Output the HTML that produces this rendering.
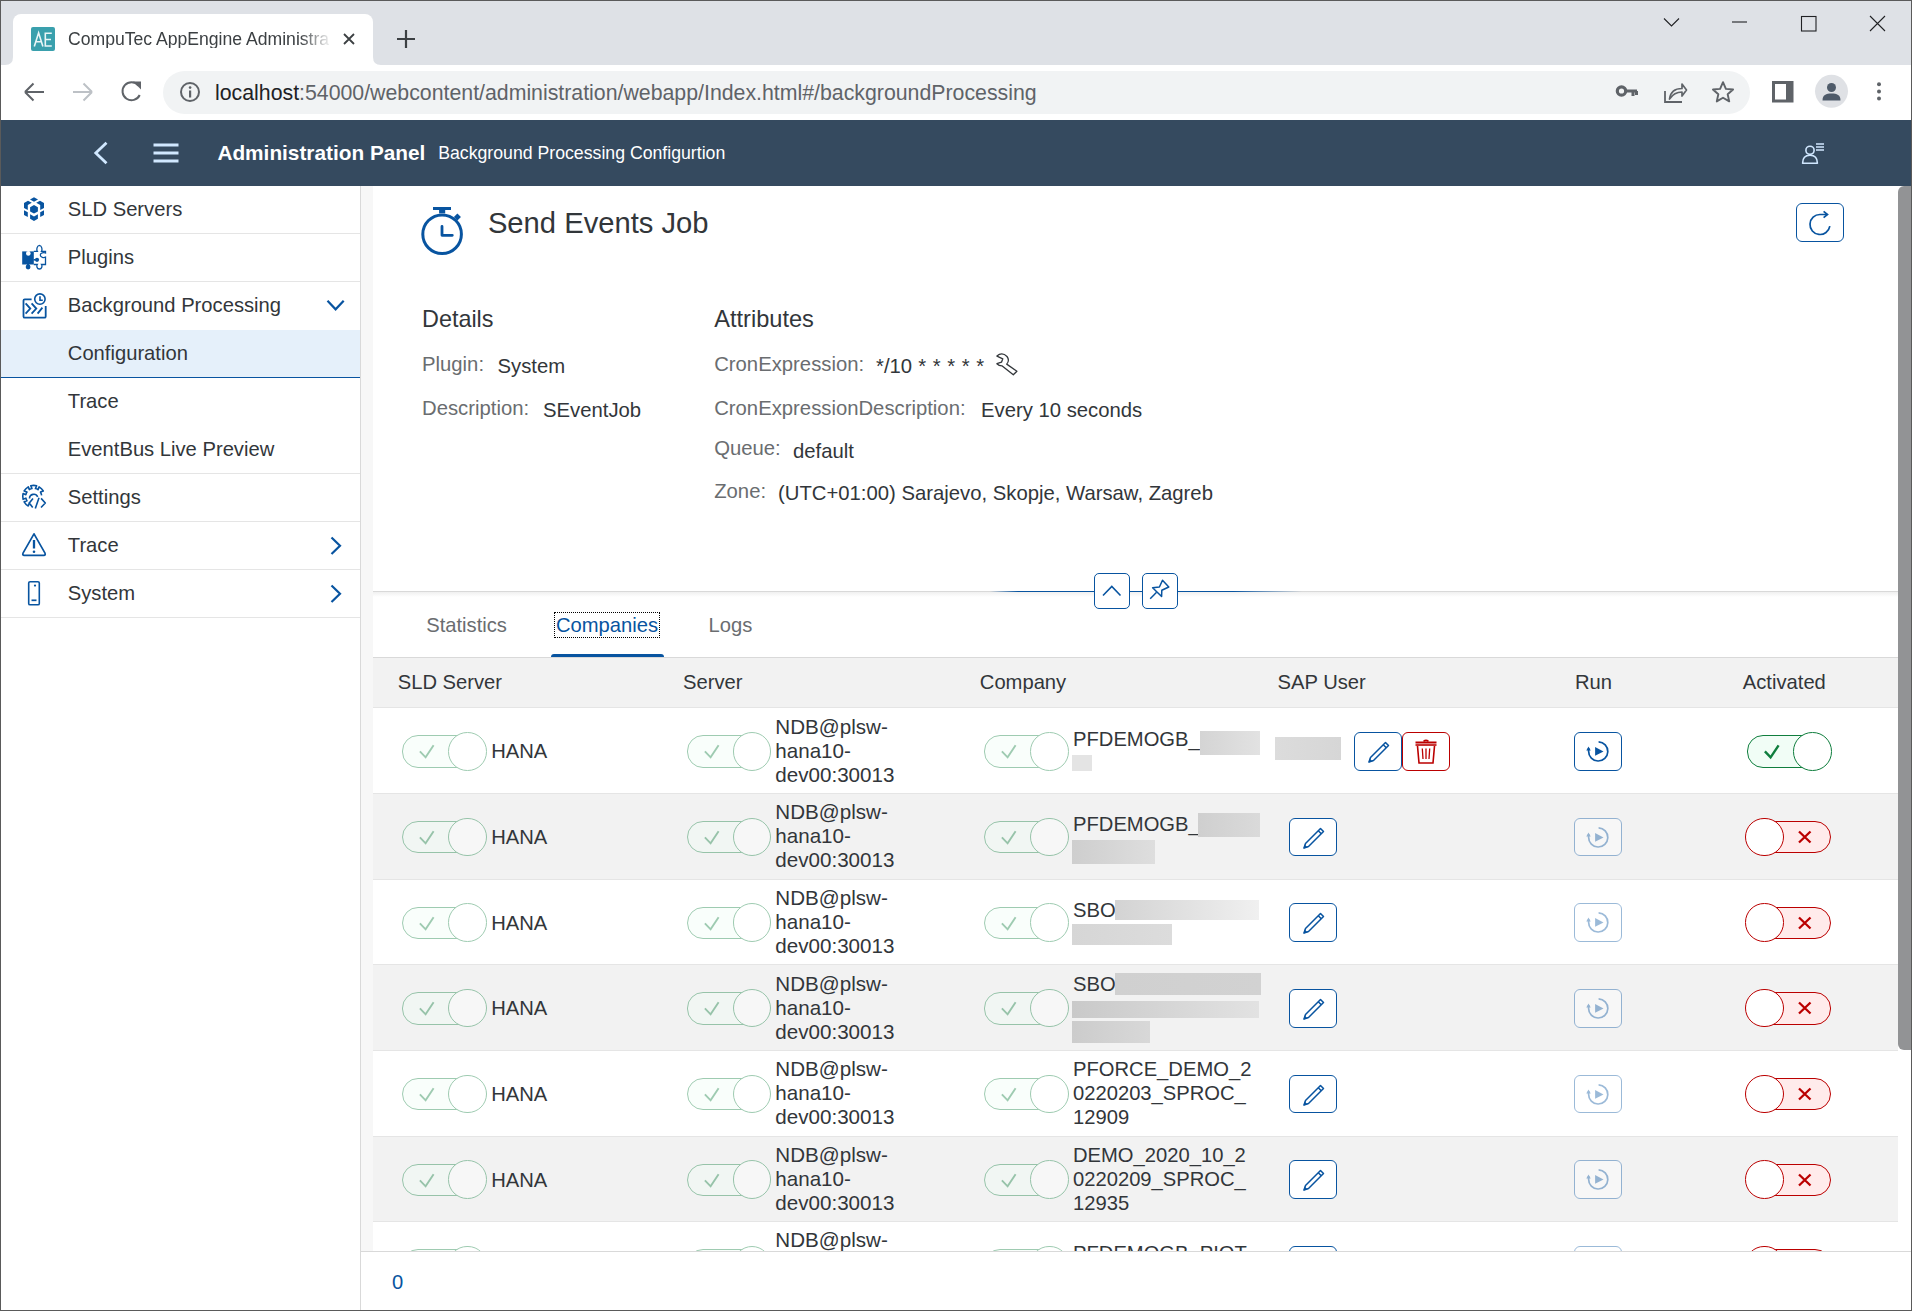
<!DOCTYPE html>
<html><head><meta charset="utf-8"><title>CompuTec AppEngine Administration</title>
<style>
html,body{margin:0;padding:0;width:1912px;height:1311px;overflow:hidden;background:#fff;font-family:"Liberation Sans", sans-serif;}
.t{position:absolute;white-space:nowrap;}
svg{position:absolute;overflow:visible;}
</style></head><body>
<div style="position:absolute;left:0px;top:0px;width:1912px;height:65px;background:#dee1e6;"></div>
<div style="position:absolute;left:13px;top:14px;width:360px;height:51px;background:#fff;border-radius:8px 8px 0 0;"></div>
<svg style="left:0;top:0" width="400" height="66"><path d="M5 65 Q13 65 13 57 L13 65 Z" fill="#fff"/><path d="M381 65 Q373 65 373 57 L373 65 Z" fill="#fff"/></svg>
<div style="position:absolute;left:31px;top:27px;width:24px;height:24px;background:#3aa0ad;border-radius:2px;"></div>
<svg style="left:0;top:0" width="60" height="60"><path d="M34.3 46.5L38.6 32.8L42.9 46.5M35.8 41.8H41.4M51.8 33.3H45.3V46H51.8M45.3 39.5H51" fill="none" stroke="#eaf6f7" stroke-width="1.6"/></svg>
<div class="t" style="left:68px;top:30.90px;font-size:17.6px;line-height:17.6px;color:#3c4043;font-weight:400;width:264px;overflow:hidden;-webkit-mask-image:linear-gradient(90deg,#000 232px,transparent 264px);">CompuTec AppEngine Administra</div>
<svg style="left:343px;top:33px" width="12" height="12"><path d="M1 1L11 11M11 1L1 11" stroke="#3c4043" stroke-width="1.8"/></svg>
<svg style="left:397px;top:30px" width="18" height="18"><path d="M9 0V18M0 9H18" stroke="#3c4043" stroke-width="2.2"/></svg>
<svg style="left:1660px;top:12px" width="240" height="24"><path d="M4 6.5L11.5 14L19 6.5" fill="none" stroke="#202124" stroke-width="1.1"/><path d="M72 10H87" stroke="#202124" stroke-width="1.1"/><rect x="141.5" y="4.5" width="14.5" height="14.5" fill="none" stroke="#202124" stroke-width="1.1"/><path d="M210 4L225 19M225 4L210 19" stroke="#202124" stroke-width="1.1"/></svg>
<div style="position:absolute;left:0px;top:65px;width:1912px;height:55px;background:#fff;"></div>
<svg style="left:0;top:65px" width="160" height="55"><path d="M25 27H44M25 27L33.5 18.5M25 27L33.5 35.5" fill="none" stroke="#5f6368" stroke-width="2"/><path d="M73 27H92M92 27L83.5 18.5M92 27L83.5 35.5" fill="none" stroke="#bdc1c6" stroke-width="2"/><path d="M138.5 20.5 A9 9 0 1 0 139.7 30" fill="none" stroke="#5f6368" stroke-width="2"/><path d="M133 16.5H141V24.5Z" fill="#5f6368" transform="rotate(0)"/></svg>
<div style="position:absolute;left:163px;top:71px;width:1587px;height:43px;background:#f1f3f4;border-radius:22px;"></div>
<svg style="left:179px;top:81px" width="22" height="22"><circle cx="11" cy="11" r="9" fill="none" stroke="#5f6368" stroke-width="2"/><rect x="10" y="9.5" width="2.2" height="7" fill="#5f6368"/><circle cx="11.1" cy="6.6" r="1.3" fill="#5f6368"/></svg>
<div class="t" style="left:215px;top:83.17px;font-size:21.3px;line-height:21.3px;color:#202124;font-weight:400;">localhost<span style="color:#5f6368">:54000/webcontent/administration/webapp/Index.html#/backgroundProcessing</span></div>
<svg style="left:1600px;top:65px" width="312" height="55"><circle cx="21.5" cy="26" r="4.2" fill="none" stroke="#5f6368" stroke-width="3.2"/><path d="M25 26H37M33 26V31M36.5 26V30" stroke="#5f6368" stroke-width="3"/><path d="M65 26V37H82" fill="none" stroke="#5f6368" stroke-width="1.8"/><path d="M69.5 34C70.5 26.5 75 23.5 82 23.5V19L86.5 25L82 31V27C76.5 27 72.5 29.5 69.5 34Z" fill="none" stroke="#5f6368" stroke-width="1.7" stroke-linejoin="round"/><path d="M123.00 17.20L125.88 23.84L133.08 24.52L127.66 29.31L129.23 36.38L123.00 32.70L116.77 36.38L118.34 29.31L112.92 24.52L120.12 23.84Z" fill="none" stroke="#5f6368" stroke-width="1.9" stroke-linejoin="round"/><rect x="173.5" y="17.5" width="18.5" height="18.5" fill="none" stroke="#5f6368" stroke-width="3"/><rect x="186" y="17" width="7" height="20" fill="#5f6368"/><circle cx="231.5" cy="26.3" r="16.5" fill="#dfe1e5"/><circle cx="231.5" cy="22.5" r="4.5" fill="#4f5b6a"/><path d="M222.5 35.5C222.5 30 226 28.5 231.5 28.5C237 28.5 240.5 30 240.5 35.5Z" fill="#4f5b6a"/><circle cx="279" cy="19.3" r="2" fill="#5f6368"/><circle cx="279" cy="26.4" r="2" fill="#5f6368"/><circle cx="279" cy="33.6" r="2" fill="#5f6368"/></svg>
<div style="position:absolute;left:0px;top:120px;width:1912px;height:66px;background:#354a5f;"></div>
<svg style="left:0;top:120px" width="200" height="66"><path d="M106.5 22.8L95.8 33L106.5 43.2" fill="none" stroke="#d1e8ff" stroke-width="2.8"/><path d="M153.5 25H178.5M153.5 33H178.5M153.5 41H178.5" stroke="#d1e8ff" stroke-width="3"/></svg>
<div class="t" style="left:217.4px;top:142.89px;font-size:20.8px;line-height:20.8px;color:#fff;font-weight:700;">Administration Panel</div>
<div class="t" style="left:438.2px;top:144.62px;font-size:17.7px;line-height:17.7px;color:#fff;font-weight:400;">Background Processing Configurtion</div>
<svg style="left:1795px;top:135px" width="40" height="40"><circle cx="15" cy="15.3" r="4.1" fill="none" stroke="#d1e8ff" stroke-width="1.6"/><path d="M7.6 28.3C7.6 22.5 10.5 20.3 15 20.3C19.5 20.3 22.4 22.5 22.4 28.3Z" fill="none" stroke="#d1e8ff" stroke-width="1.6" stroke-linejoin="round"/><path d="M21 9H29M21 12H29M21 15H29" stroke="#d1e8ff" stroke-width="1.3"/></svg>
<div style="position:absolute;left:0px;top:186px;width:360px;height:1125px;background:#fff;"></div>
<div style="position:absolute;left:360px;top:186px;width:1px;height:1125px;background:#d9d9d9;"></div>
<div style="position:absolute;left:361px;top:186px;width:12px;height:1065px;background:#f7f7f7;"></div>
<div style="position:absolute;left:1px;top:330px;width:359px;height:47px;background:#e5f0fa;"></div>
<div style="position:absolute;left:1px;top:377px;width:359px;height:1px;background:#0854a0;"></div>
<div style="position:absolute;left:1px;top:233px;width:359px;height:1px;background:#e5e5e5;"></div>
<div style="position:absolute;left:1px;top:281px;width:359px;height:1px;background:#e5e5e5;"></div>
<div style="position:absolute;left:1px;top:473px;width:359px;height:1px;background:#e5e5e5;"></div>
<div style="position:absolute;left:1px;top:521px;width:359px;height:1px;background:#e5e5e5;"></div>
<div style="position:absolute;left:1px;top:569px;width:359px;height:1px;background:#e5e5e5;"></div>
<div style="position:absolute;left:1px;top:617px;width:359px;height:1px;background:#e5e5e5;"></div>
<div class="t" style="left:67.8px;top:198.70px;font-size:20.2px;line-height:20.2px;color:#32363a;font-weight:400;">SLD Servers</div>
<div class="t" style="left:67.8px;top:246.70px;font-size:20.2px;line-height:20.2px;color:#32363a;font-weight:400;">Plugins</div>
<div class="t" style="left:67.8px;top:294.70px;font-size:20.2px;line-height:20.2px;color:#32363a;font-weight:400;">Background Processing</div>
<div class="t" style="left:67.8px;top:342.60px;font-size:20.2px;line-height:20.2px;color:#32363a;font-weight:400;">Configuration</div>
<div class="t" style="left:67.8px;top:390.70px;font-size:20.2px;line-height:20.2px;color:#32363a;font-weight:400;">Trace</div>
<div class="t" style="left:67.8px;top:438.60px;font-size:20.2px;line-height:20.2px;color:#32363a;font-weight:400;">EventBus Live Preview</div>
<div class="t" style="left:67.8px;top:486.80px;font-size:20.2px;line-height:20.2px;color:#32363a;font-weight:400;">Settings</div>
<div class="t" style="left:67.8px;top:534.80px;font-size:20.2px;line-height:20.2px;color:#32363a;font-weight:400;">Trace</div>
<div class="t" style="left:67.8px;top:582.80px;font-size:20.2px;line-height:20.2px;color:#32363a;font-weight:400;">System</div>
<svg style="left:0;top:0" width="360" height="640"><g fill="#0854a0"><path d="M34 197.2L38 199.4L34 201.7L30 199.4Z"/><path d="M24 203L28 200.8L31.8 202.8L27.8 205V210L24 208Z"/><path d="M44 203L40 200.8L36.2 202.8L40.2 205V210L44 208Z"/><path d="M34 205L37.9 207.2V211.5L34 213.6L30.1 211.5V207.2Z"/><path d="M24 210.3L27.8 212.3V217L24 215Z"/><path d="M44 210.3L40.2 212.3V217L44 215Z"/><path d="M30.1 214.3L34 216.5L37.9 214.3V218.8L34 221L30.1 218.8Z"/></g><rect x="22.2" y="251.4" width="11.6" height="13.1" fill="#0854a0"/><circle cx="28.3" cy="253.4" r="2.3" fill="#fff"/><circle cx="28.1" cy="267" r="2.4" fill="#0854a0"/><rect x="27" y="264" width="2.2" height="2" fill="#0854a0"/><circle cx="37" cy="259.8" r="2.1" fill="#0854a0"/><rect x="33.5" y="259" width="2" height="1.6" fill="#0854a0"/><path d="M33.8 251.4H37.3C36.5 250.2 36.7 245.5 39.4 245.3C42.1 245.5 42.3 250.2 41.5 251.4H45.5V253C44 252.3 40.3 252.5 40.3 255.1C40.3 257.7 44 257.9 45.5 257.2V264.5H41.5C42.3 265.7 42.1 269 39.4 269C36.7 269 36.5 265.7 37.3 264.5H33.8" fill="none" stroke="#0854a0" stroke-width="1.3"/><g fill="none" stroke="#0854a0" stroke-width="1.8"><path d="M31.6 299.3H24.8Q23.5 299.3 23.5 300.6V316.4Q23.5 317.7 24.8 317.7H44.4Q45.7 317.7 45.7 316.4V306"/><circle cx="39.9" cy="299.1" r="5.2" stroke-width="1.6"/><path d="M40 296.2V300.2H42.8" stroke-width="1.6"/><path d="M25.6 303.3L30.3 308.6L25.6 313.6M31.6 303.3L36.3 308.6L31.6 313.6M42.4 307.6L37.6 313.6"/></g><g fill="none" stroke="#0854a0" stroke-width="1.6" stroke-linejoin="round"><path d="M41.62 495.29A8.0 8.0 0 0 0 40.45 492.10L43.27 490.98A11.0 11.0 0 0 0 39.12 486.83L38.00 489.65A8.0 8.0 0 0 0 35.43 488.59L36.64 485.80A11.0 11.0 0 0 0 30.76 485.80L31.97 488.59A8.0 8.0 0 0 0 29.40 489.65L28.28 486.83A11.0 11.0 0 0 0 24.13 490.98L26.95 492.10A8.0 8.0 0 0 0 25.89 494.67L23.10 493.46A11.0 11.0 0 0 0 23.10 499.34L25.89 498.13A8.0 8.0 0 0 0 26.95 500.70L24.13 501.82A11.0 11.0 0 0 0 28.28 505.97L29.40 503.15A8.0 8.0 0 0 0 28.77 502.70"/><path d="M29.5 498.5A4.3 4.3 0 0 1 37.7 496.8"/><path d="M33 498.4L29.3 503L32.7 507.5M41.1 498.4L45.3 503L41 507.5M39 497.7L35.3 508.4"/></g><path d="M34 533.8L45 553.2Q45.8 555.3 43.8 555.3H24.2Q22.2 555.3 23 553.2Z" fill="none" stroke="#0854a0" stroke-width="1.7" stroke-linejoin="round"/><path d="M34 540V548.5" stroke="#0854a0" stroke-width="2.3"/><circle cx="34" cy="551.8" r="1.3" fill="#0854a0"/><rect x="28.7" y="581.7" width="10.6" height="23.1" rx="1.4" fill="none" stroke="#0854a0" stroke-width="1.6"/><circle cx="35" cy="585.6" r="1.1" fill="#0854a0"/><path d="M31.5 600.3H36.5" stroke="#0854a0" stroke-width="1.7"/><path d="M327.5 300.8L335.6 309.3L343.7 300.8" fill="none" stroke="#0854a0" stroke-width="2.2"/><path d="M331.5 537.5L340 545.8L331.5 554" fill="none" stroke="#0854a0" stroke-width="2.2"/><path d="M331.5 585.5L340 593.8L331.5 602" fill="none" stroke="#0854a0" stroke-width="2.2"/></svg>
<div class="t" style="left:487.9px;top:208.98px;font-size:29.2px;line-height:29.2px;color:#32363a;font-weight:400;">Send Events Job</div>
<svg style="left:0;top:0" width="480" height="270"><circle cx="442.1" cy="234.2" r="19.3" fill="none" stroke="#0854a0" stroke-width="3"/><path d="M433 208.5H451" stroke="#0854a0" stroke-width="3"/><path d="M439.1 210V213.5Q442.1 212.8 445.2 213.5V210Z" fill="#0854a0"/><rect x="454.9" y="214.5" width="5" height="5" transform="rotate(45 457.4 217)" fill="#0854a0"/><path d="M442 226.5V235.3H452.3" fill="none" stroke="#0854a0" stroke-width="2.8" stroke-linecap="round" stroke-linejoin="round"/></svg>
<div style="position:absolute;left:1796px;top:203px;width:46px;height:37px;border:1px solid #0854a0;border-radius:6px;background:#fff;"></div>
<svg style="left:1796px;top:203px" width="48" height="39"><path d="M33.85 23.2A10 10 0 1 1 24 11.5H31.3" fill="none" stroke="#0854a0" stroke-width="1.7"/><path d="M27.6 8.3L31.5 11.5L27.6 14.6" fill="none" stroke="#0854a0" stroke-width="1.7"/></svg>
<div class="t" style="left:422px;top:308.29px;font-size:23.4px;line-height:23.4px;color:#32363a;font-weight:400;">Details</div>
<div class="t" style="left:714.2px;top:308.12px;font-size:23.6px;line-height:23.6px;color:#32363a;font-weight:400;">Attributes</div>
<div class="t" style="left:422px;top:353.52px;font-size:20.3px;line-height:20.3px;color:#6a6d70;font-weight:400;">Plugin:</div>
<div class="t" style="left:497.5px;top:355.82px;font-size:20.3px;line-height:20.3px;color:#32363a;font-weight:400;">System</div>
<div class="t" style="left:422px;top:397.52px;font-size:20.3px;line-height:20.3px;color:#6a6d70;font-weight:400;">Description:</div>
<div class="t" style="left:543px;top:399.82px;font-size:20.3px;line-height:20.3px;color:#32363a;font-weight:400;">SEventJob</div>
<div class="t" style="left:714.2px;top:353.52px;font-size:20.3px;line-height:20.3px;color:#6a6d70;font-weight:400;">CronExpression:</div>
<div class="t" style="left:876px;top:356.42px;font-size:20.3px;line-height:20.3px;color:#32363a;font-weight:400;">*/10<span style="letter-spacing:0.5px"> * * * * *</span></div>
<svg style="left:0;top:0" width="1100" height="400"><path d="M996.9 356.1Q1002 351.5 1007 356.5Q1010 360.5 1006.7 364.1L1016.9 371.2L1013.3 374.8L1002.2 365.9Q999 366 996.9 363.7L1001.5 362.2L1002.8 358.8Z" fill="none" stroke="#32363a" stroke-width="1.3" stroke-linejoin="round"/></svg>
<div class="t" style="left:714.2px;top:397.52px;font-size:20.3px;line-height:20.3px;color:#6a6d70;font-weight:400;">CronExpressionDescription:</div>
<div class="t" style="left:981px;top:399.82px;font-size:20.3px;line-height:20.3px;color:#32363a;font-weight:400;">Every 10 seconds</div>
<div class="t" style="left:714.2px;top:437.82px;font-size:20.3px;line-height:20.3px;color:#6a6d70;font-weight:400;">Queue:</div>
<div class="t" style="left:793px;top:441.42px;font-size:20.3px;line-height:20.3px;color:#32363a;font-weight:400;">default</div>
<div class="t" style="left:714.2px;top:480.82px;font-size:20.3px;line-height:20.3px;color:#6a6d70;font-weight:400;">Zone:</div>
<div class="t" style="left:778px;top:483.32px;font-size:20.3px;line-height:20.3px;color:#32363a;font-weight:400;">(UTC+01:00) Sarajevo, Skopje, Warsaw, Zagreb</div>
<div style="position:absolute;left:373px;top:591px;width:1525px;height:1px;background:#d9d9d9;"></div>
<div style="position:absolute;left:373px;top:592px;width:1525px;height:5px;background:linear-gradient(#f0f0f0,#fff);"></div>
<div style="position:absolute;left:990px;top:591px;width:312px;height:1px;background:linear-gradient(90deg,rgba(8,84,160,0),#0854a0 9%,#0854a0 78%,rgba(8,84,160,0));"></div>
<div style="position:absolute;left:1094px;top:573px;width:34px;height:34px;border:1px solid #0854a0;border-radius:5px;background:#fff;"></div>
<div style="position:absolute;left:1142px;top:573px;width:34px;height:34px;border:1px solid #0854a0;border-radius:5px;background:#fff;"></div>
<svg style="left:1094px;top:573px" width="90" height="36"><path d="M9 22.5L17.8 13.5L26.5 22.5" fill="none" stroke="#0854a0" stroke-width="1.6"/><g transform="translate(48,0)" fill="none" stroke="#0854a0" stroke-width="1.5" stroke-linejoin="round"><path d="M20.5 7.3L26.8 14L19.8 17.3L19.6 23.5L10.6 14.7L17.4 14Z"/><path d="M14.6 19.2L8.2 25.7"/></g></svg>
<div class="t" style="left:426.2px;top:615.10px;font-size:20.2px;line-height:20.2px;color:#6a6d70;font-weight:400;">Statistics</div>
<div class="t" style="left:555.9px;top:615.10px;font-size:20.2px;line-height:20.2px;color:#0854a0;font-weight:400;">Companies</div>
<div style="position:absolute;left:554px;top:612px;width:106px;height:26px;border:1px dotted #000;box-sizing:border-box;"></div>
<div class="t" style="left:708.6px;top:615.10px;font-size:20.2px;line-height:20.2px;color:#6a6d70;font-weight:400;">Logs</div>
<div style="position:absolute;left:551px;top:654px;width:113px;height:3px;background:#0854a0;border-radius:3px 3px 0 0;"></div>
<div style="position:absolute;left:373px;top:657px;width:1525px;height:1px;background:#d9d9d9;"></div>
<div style="position:absolute;left:373px;top:658px;width:1525px;height:49px;background:#f2f2f2;"></div>
<div style="position:absolute;left:373px;top:707px;width:1525px;height:1px;background:#e5e5e5;"></div>
<div class="t" style="left:397.7px;top:672.30px;font-size:20.2px;line-height:20.2px;color:#32363a;font-weight:400;">SLD Server</div>
<div class="t" style="left:683px;top:672.30px;font-size:20.2px;line-height:20.2px;color:#32363a;font-weight:400;">Server</div>
<div class="t" style="left:979.8px;top:672.30px;font-size:20.2px;line-height:20.2px;color:#32363a;font-weight:400;">Company</div>
<div class="t" style="left:1277.5px;top:672.30px;font-size:20.2px;line-height:20.2px;color:#32363a;font-weight:400;">SAP User</div>
<div class="t" style="left:1574.9px;top:672.30px;font-size:20.2px;line-height:20.2px;color:#32363a;font-weight:400;">Run</div>
<div class="t" style="left:1742.8px;top:672.30px;font-size:20.2px;line-height:20.2px;color:#32363a;font-weight:400;">Activated</div>
<div style="position:absolute;left:373px;top:708px;width:1525px;height:85px;background:#fff;"></div>
<div style="position:absolute;left:373px;top:793px;width:1525px;height:1px;background:#e5e5e5;"></div>
<div style="position:absolute;left:402.4px;top:735.2px;width:85px;height:39px;opacity:0.4;"><div style="position:absolute;left:0;top:0;width:80px;height:30.5px;border:1px solid #107e3e;border-radius:16px;background:#f1fdf6;"></div><svg style="left:0;top:0" width="40" height="33"><path d="M17.9 16.3L23.6 22.3L31.6 10.3" fill="none" stroke="#107e3e" stroke-width="1.9"/></svg><div style="position:absolute;left:45.9px;top:-3.2px;width:36.5px;height:36.5px;border:1px solid #107e3e;border-radius:50%;background:#fff;"></div></div>
<div class="t" style="left:491.2px;top:741.30px;font-size:20.2px;line-height:20.2px;color:#32363a;font-weight:400;">HANA</div>
<div style="position:absolute;left:686.9px;top:735.2px;width:85px;height:39px;opacity:0.4;"><div style="position:absolute;left:0;top:0;width:80px;height:30.5px;border:1px solid #107e3e;border-radius:16px;background:#f1fdf6;"></div><svg style="left:0;top:0" width="40" height="33"><path d="M17.9 16.3L23.6 22.3L31.6 10.3" fill="none" stroke="#107e3e" stroke-width="1.9"/></svg><div style="position:absolute;left:45.9px;top:-3.2px;width:36.5px;height:36.5px;border:1px solid #107e3e;border-radius:50%;background:#fff;"></div></div>
<div class="t" style="left:775.3px;top:716.56px;font-size:20.6px;line-height:20.6px;color:#32363a;font-weight:400;">NDB@plsw-</div>
<div class="t" style="left:775.3px;top:740.56px;font-size:20.6px;line-height:20.6px;color:#32363a;font-weight:400;">hana10-</div>
<div class="t" style="left:775.3px;top:764.56px;font-size:20.6px;line-height:20.6px;color:#32363a;font-weight:400;">dev00:30013</div>
<div style="position:absolute;left:984.3px;top:735.2px;width:85px;height:39px;opacity:0.4;"><div style="position:absolute;left:0;top:0;width:80px;height:30.5px;border:1px solid #107e3e;border-radius:16px;background:#f1fdf6;"></div><svg style="left:0;top:0" width="40" height="33"><path d="M17.9 16.3L23.6 22.3L31.6 10.3" fill="none" stroke="#107e3e" stroke-width="1.9"/></svg><div style="position:absolute;left:45.9px;top:-3.2px;width:36.5px;height:36.5px;border:1px solid #107e3e;border-radius:50%;background:#fff;"></div></div>
<div class="t" style="left:1073px;top:728.70px;font-size:20.2px;line-height:20.2px;color:#32363a;font-weight:400;">PFDEMOGB_</div>
<div style="position:absolute;left:1354px;top:732.1px;width:46px;height:36.5px;border:1px solid #0854a0;border-radius:6px;background:#fff;"><svg style="left:-1px;top:-1px" width="48" height="39"><path d="M15 30L16.5 25.5L31.5 10.5L34.5 13.5L19.5 28.5Z" fill="none" stroke="#0854a0" stroke-width="1.5" stroke-linejoin="round"/><path d="M29.3 12.7L32.3 15.7" stroke="#0854a0" stroke-width="1.5"/><path d="M14.5 30.5L15.6 26.6L18.6 29.4Z" fill="#0854a0"/></svg></div>
<div style="position:absolute;left:1402px;top:732.1px;width:46px;height:36.5px;border:1px solid #bb0000;border-radius:6px;background:#fff;"><svg style="left:-1px;top:-1px" width="48" height="39"><g fill="none" stroke="#bb0000"><path d="M13.5 10.5H34.5" stroke-width="2"/><path d="M13.5 13H34.5" stroke-width="1.6"/><path d="M21.5 9.3Q24 7.5 26.5 9.3" stroke-width="1.6"/><path d="M15.5 14L17 31H31L32.5 14" stroke-width="1.6"/><path d="M20.3 16.5L21 27M24 16.5V27M27.7 16.5L27 27" stroke-width="1.3"/></g></svg></div>
<div style="position:absolute;left:1574px;top:732.1px;width:46px;height:36.5px;border:1px solid #0854a0;border-radius:6px;background:#fff;"><svg style="left:-1px;top:-1px" width="48" height="39"><path d="M24.6 9.8A9.6 9.6 0 1 1 14.6 19.3V16" fill="none" stroke="#0854a0" stroke-width="1.7"/><path d="M14.5 14.5L12.3 18.5H16.7Z" fill="#0854a0"/><path d="M21.1 15.1V23.8L29.5 19.4Z" fill="#0854a0"/></svg></div>
<div style="position:absolute;left:1747.3px;top:735.2px;width:85px;height:39px;"><div style="position:absolute;left:0;top:0;width:80px;height:30.5px;border:1px solid #107e3e;border-radius:16px;background:#f1fdf6;"></div><svg style="left:0;top:0" width="40" height="33"><path d="M17.9 16.3L23.6 22.3L31.6 10.3" fill="none" stroke="#107e3e" stroke-width="2.4"/></svg><div style="position:absolute;left:45.9px;top:-3.2px;width:36.5px;height:36.5px;border:1px solid #107e3e;border-radius:50%;background:#fff;"></div></div>
<div style="position:absolute;left:373px;top:794px;width:1525px;height:85px;background:#f2f2f2;"></div>
<div style="position:absolute;left:373px;top:879px;width:1525px;height:1px;background:#e5e5e5;"></div>
<div style="position:absolute;left:402.4px;top:820.8px;width:85px;height:39px;opacity:0.4;"><div style="position:absolute;left:0;top:0;width:80px;height:30.5px;border:1px solid #107e3e;border-radius:16px;background:#f1fdf6;"></div><svg style="left:0;top:0" width="40" height="33"><path d="M17.9 16.3L23.6 22.3L31.6 10.3" fill="none" stroke="#107e3e" stroke-width="1.9"/></svg><div style="position:absolute;left:45.9px;top:-3.2px;width:36.5px;height:36.5px;border:1px solid #107e3e;border-radius:50%;background:#fff;"></div></div>
<div class="t" style="left:491.2px;top:826.95px;font-size:20.2px;line-height:20.2px;color:#32363a;font-weight:400;">HANA</div>
<div style="position:absolute;left:686.9px;top:820.8px;width:85px;height:39px;opacity:0.4;"><div style="position:absolute;left:0;top:0;width:80px;height:30.5px;border:1px solid #107e3e;border-radius:16px;background:#f1fdf6;"></div><svg style="left:0;top:0" width="40" height="33"><path d="M17.9 16.3L23.6 22.3L31.6 10.3" fill="none" stroke="#107e3e" stroke-width="1.9"/></svg><div style="position:absolute;left:45.9px;top:-3.2px;width:36.5px;height:36.5px;border:1px solid #107e3e;border-radius:50%;background:#fff;"></div></div>
<div class="t" style="left:775.3px;top:802.21px;font-size:20.6px;line-height:20.6px;color:#32363a;font-weight:400;">NDB@plsw-</div>
<div class="t" style="left:775.3px;top:826.21px;font-size:20.6px;line-height:20.6px;color:#32363a;font-weight:400;">hana10-</div>
<div class="t" style="left:775.3px;top:850.21px;font-size:20.6px;line-height:20.6px;color:#32363a;font-weight:400;">dev00:30013</div>
<div style="position:absolute;left:984.3px;top:820.8px;width:85px;height:39px;opacity:0.4;"><div style="position:absolute;left:0;top:0;width:80px;height:30.5px;border:1px solid #107e3e;border-radius:16px;background:#f1fdf6;"></div><svg style="left:0;top:0" width="40" height="33"><path d="M17.9 16.3L23.6 22.3L31.6 10.3" fill="none" stroke="#107e3e" stroke-width="1.9"/></svg><div style="position:absolute;left:45.9px;top:-3.2px;width:36.5px;height:36.5px;border:1px solid #107e3e;border-radius:50%;background:#fff;"></div></div>
<div class="t" style="left:1073px;top:814.35px;font-size:20.2px;line-height:20.2px;color:#32363a;font-weight:400;">PFDEMOGB_</div>
<div style="position:absolute;left:1289px;top:817.7px;width:46px;height:36.5px;border:1px solid #0854a0;border-radius:6px;background:#fff;"><svg style="left:-1px;top:-1px" width="48" height="39"><path d="M15 30L16.5 25.5L31.5 10.5L34.5 13.5L19.5 28.5Z" fill="none" stroke="#0854a0" stroke-width="1.5" stroke-linejoin="round"/><path d="M29.3 12.7L32.3 15.7" stroke="#0854a0" stroke-width="1.5"/><path d="M14.5 30.5L15.6 26.6L18.6 29.4Z" fill="#0854a0"/></svg></div>
<div style="position:absolute;left:1574px;top:817.7px;width:46px;height:36.5px;border:1px solid #0854a0;border-radius:6px;background:#fff;opacity:0.4;"><svg style="left:-1px;top:-1px" width="48" height="39"><path d="M24.6 9.8A9.6 9.6 0 1 1 14.6 19.3V16" fill="none" stroke="#0854a0" stroke-width="1.7"/><path d="M14.5 14.5L12.3 18.5H16.7Z" fill="#0854a0"/><path d="M21.1 15.1V23.8L29.5 19.4Z" fill="#0854a0"/></svg></div>
<div style="position:absolute;left:1745.3px;top:820.8px;width:86px;height:39px;"><div style="position:absolute;left:2px;top:0;width:82px;height:30.5px;border:1px solid #bb0000;border-radius:16px;background:#ffebeb;"></div><svg style="left:0;top:0" width="86" height="33"><path d="M54 10.5L65.5 21.5M65.5 10.5L54 21.5" fill="none" stroke="#bb0000" stroke-width="2.3"/></svg><div style="position:absolute;left:0;top:-3.2px;width:36.5px;height:36.5px;border:1px solid #bb0000;border-radius:50%;background:#fff;"></div></div>
<div style="position:absolute;left:373px;top:880px;width:1525px;height:84px;background:#fff;"></div>
<div style="position:absolute;left:373px;top:964px;width:1525px;height:1px;background:#e5e5e5;"></div>
<div style="position:absolute;left:402.4px;top:906.5px;width:85px;height:39px;opacity:0.4;"><div style="position:absolute;left:0;top:0;width:80px;height:30.5px;border:1px solid #107e3e;border-radius:16px;background:#f1fdf6;"></div><svg style="left:0;top:0" width="40" height="33"><path d="M17.9 16.3L23.6 22.3L31.6 10.3" fill="none" stroke="#107e3e" stroke-width="1.9"/></svg><div style="position:absolute;left:45.9px;top:-3.2px;width:36.5px;height:36.5px;border:1px solid #107e3e;border-radius:50%;background:#fff;"></div></div>
<div class="t" style="left:491.2px;top:912.60px;font-size:20.2px;line-height:20.2px;color:#32363a;font-weight:400;">HANA</div>
<div style="position:absolute;left:686.9px;top:906.5px;width:85px;height:39px;opacity:0.4;"><div style="position:absolute;left:0;top:0;width:80px;height:30.5px;border:1px solid #107e3e;border-radius:16px;background:#f1fdf6;"></div><svg style="left:0;top:0" width="40" height="33"><path d="M17.9 16.3L23.6 22.3L31.6 10.3" fill="none" stroke="#107e3e" stroke-width="1.9"/></svg><div style="position:absolute;left:45.9px;top:-3.2px;width:36.5px;height:36.5px;border:1px solid #107e3e;border-radius:50%;background:#fff;"></div></div>
<div class="t" style="left:775.3px;top:887.86px;font-size:20.6px;line-height:20.6px;color:#32363a;font-weight:400;">NDB@plsw-</div>
<div class="t" style="left:775.3px;top:911.86px;font-size:20.6px;line-height:20.6px;color:#32363a;font-weight:400;">hana10-</div>
<div class="t" style="left:775.3px;top:935.86px;font-size:20.6px;line-height:20.6px;color:#32363a;font-weight:400;">dev00:30013</div>
<div style="position:absolute;left:984.3px;top:906.5px;width:85px;height:39px;opacity:0.4;"><div style="position:absolute;left:0;top:0;width:80px;height:30.5px;border:1px solid #107e3e;border-radius:16px;background:#f1fdf6;"></div><svg style="left:0;top:0" width="40" height="33"><path d="M17.9 16.3L23.6 22.3L31.6 10.3" fill="none" stroke="#107e3e" stroke-width="1.9"/></svg><div style="position:absolute;left:45.9px;top:-3.2px;width:36.5px;height:36.5px;border:1px solid #107e3e;border-radius:50%;background:#fff;"></div></div>
<div class="t" style="left:1073px;top:900.00px;font-size:20.2px;line-height:20.2px;color:#32363a;font-weight:400;">SBO</div>
<div style="position:absolute;left:1289px;top:903.4px;width:46px;height:36.5px;border:1px solid #0854a0;border-radius:6px;background:#fff;"><svg style="left:-1px;top:-1px" width="48" height="39"><path d="M15 30L16.5 25.5L31.5 10.5L34.5 13.5L19.5 28.5Z" fill="none" stroke="#0854a0" stroke-width="1.5" stroke-linejoin="round"/><path d="M29.3 12.7L32.3 15.7" stroke="#0854a0" stroke-width="1.5"/><path d="M14.5 30.5L15.6 26.6L18.6 29.4Z" fill="#0854a0"/></svg></div>
<div style="position:absolute;left:1574px;top:903.4px;width:46px;height:36.5px;border:1px solid #0854a0;border-radius:6px;background:#fff;opacity:0.4;"><svg style="left:-1px;top:-1px" width="48" height="39"><path d="M24.6 9.8A9.6 9.6 0 1 1 14.6 19.3V16" fill="none" stroke="#0854a0" stroke-width="1.7"/><path d="M14.5 14.5L12.3 18.5H16.7Z" fill="#0854a0"/><path d="M21.1 15.1V23.8L29.5 19.4Z" fill="#0854a0"/></svg></div>
<div style="position:absolute;left:1745.3px;top:906.5px;width:86px;height:39px;"><div style="position:absolute;left:2px;top:0;width:82px;height:30.5px;border:1px solid #bb0000;border-radius:16px;background:#ffebeb;"></div><svg style="left:0;top:0" width="86" height="33"><path d="M54 10.5L65.5 21.5M65.5 10.5L54 21.5" fill="none" stroke="#bb0000" stroke-width="2.3"/></svg><div style="position:absolute;left:0;top:-3.2px;width:36.5px;height:36.5px;border:1px solid #bb0000;border-radius:50%;background:#fff;"></div></div>
<div style="position:absolute;left:373px;top:965px;width:1525px;height:85px;background:#f2f2f2;"></div>
<div style="position:absolute;left:373px;top:1050px;width:1525px;height:1px;background:#e5e5e5;"></div>
<div style="position:absolute;left:402.4px;top:992.1px;width:85px;height:39px;opacity:0.4;"><div style="position:absolute;left:0;top:0;width:80px;height:30.5px;border:1px solid #107e3e;border-radius:16px;background:#f1fdf6;"></div><svg style="left:0;top:0" width="40" height="33"><path d="M17.9 16.3L23.6 22.3L31.6 10.3" fill="none" stroke="#107e3e" stroke-width="1.9"/></svg><div style="position:absolute;left:45.9px;top:-3.2px;width:36.5px;height:36.5px;border:1px solid #107e3e;border-radius:50%;background:#fff;"></div></div>
<div class="t" style="left:491.2px;top:998.25px;font-size:20.2px;line-height:20.2px;color:#32363a;font-weight:400;">HANA</div>
<div style="position:absolute;left:686.9px;top:992.1px;width:85px;height:39px;opacity:0.4;"><div style="position:absolute;left:0;top:0;width:80px;height:30.5px;border:1px solid #107e3e;border-radius:16px;background:#f1fdf6;"></div><svg style="left:0;top:0" width="40" height="33"><path d="M17.9 16.3L23.6 22.3L31.6 10.3" fill="none" stroke="#107e3e" stroke-width="1.9"/></svg><div style="position:absolute;left:45.9px;top:-3.2px;width:36.5px;height:36.5px;border:1px solid #107e3e;border-radius:50%;background:#fff;"></div></div>
<div class="t" style="left:775.3px;top:973.51px;font-size:20.6px;line-height:20.6px;color:#32363a;font-weight:400;">NDB@plsw-</div>
<div class="t" style="left:775.3px;top:997.51px;font-size:20.6px;line-height:20.6px;color:#32363a;font-weight:400;">hana10-</div>
<div class="t" style="left:775.3px;top:1021.51px;font-size:20.6px;line-height:20.6px;color:#32363a;font-weight:400;">dev00:30013</div>
<div style="position:absolute;left:984.3px;top:992.1px;width:85px;height:39px;opacity:0.4;"><div style="position:absolute;left:0;top:0;width:80px;height:30.5px;border:1px solid #107e3e;border-radius:16px;background:#f1fdf6;"></div><svg style="left:0;top:0" width="40" height="33"><path d="M17.9 16.3L23.6 22.3L31.6 10.3" fill="none" stroke="#107e3e" stroke-width="1.9"/></svg><div style="position:absolute;left:45.9px;top:-3.2px;width:36.5px;height:36.5px;border:1px solid #107e3e;border-radius:50%;background:#fff;"></div></div>
<div class="t" style="left:1073px;top:973.65px;font-size:20.2px;line-height:20.2px;color:#32363a;font-weight:400;">SBO</div>
<div style="position:absolute;left:1289px;top:989.0px;width:46px;height:36.5px;border:1px solid #0854a0;border-radius:6px;background:#fff;"><svg style="left:-1px;top:-1px" width="48" height="39"><path d="M15 30L16.5 25.5L31.5 10.5L34.5 13.5L19.5 28.5Z" fill="none" stroke="#0854a0" stroke-width="1.5" stroke-linejoin="round"/><path d="M29.3 12.7L32.3 15.7" stroke="#0854a0" stroke-width="1.5"/><path d="M14.5 30.5L15.6 26.6L18.6 29.4Z" fill="#0854a0"/></svg></div>
<div style="position:absolute;left:1574px;top:989.0px;width:46px;height:36.5px;border:1px solid #0854a0;border-radius:6px;background:#fff;opacity:0.4;"><svg style="left:-1px;top:-1px" width="48" height="39"><path d="M24.6 9.8A9.6 9.6 0 1 1 14.6 19.3V16" fill="none" stroke="#0854a0" stroke-width="1.7"/><path d="M14.5 14.5L12.3 18.5H16.7Z" fill="#0854a0"/><path d="M21.1 15.1V23.8L29.5 19.4Z" fill="#0854a0"/></svg></div>
<div style="position:absolute;left:1745.3px;top:992.1px;width:86px;height:39px;"><div style="position:absolute;left:2px;top:0;width:82px;height:30.5px;border:1px solid #bb0000;border-radius:16px;background:#ffebeb;"></div><svg style="left:0;top:0" width="86" height="33"><path d="M54 10.5L65.5 21.5M65.5 10.5L54 21.5" fill="none" stroke="#bb0000" stroke-width="2.3"/></svg><div style="position:absolute;left:0;top:-3.2px;width:36.5px;height:36.5px;border:1px solid #bb0000;border-radius:50%;background:#fff;"></div></div>
<div style="position:absolute;left:373px;top:1051px;width:1525px;height:85px;background:#fff;"></div>
<div style="position:absolute;left:373px;top:1136px;width:1525px;height:1px;background:#e5e5e5;"></div>
<div style="position:absolute;left:402.4px;top:1077.8px;width:85px;height:39px;opacity:0.4;"><div style="position:absolute;left:0;top:0;width:80px;height:30.5px;border:1px solid #107e3e;border-radius:16px;background:#f1fdf6;"></div><svg style="left:0;top:0" width="40" height="33"><path d="M17.9 16.3L23.6 22.3L31.6 10.3" fill="none" stroke="#107e3e" stroke-width="1.9"/></svg><div style="position:absolute;left:45.9px;top:-3.2px;width:36.5px;height:36.5px;border:1px solid #107e3e;border-radius:50%;background:#fff;"></div></div>
<div class="t" style="left:491.2px;top:1083.90px;font-size:20.2px;line-height:20.2px;color:#32363a;font-weight:400;">HANA</div>
<div style="position:absolute;left:686.9px;top:1077.8px;width:85px;height:39px;opacity:0.4;"><div style="position:absolute;left:0;top:0;width:80px;height:30.5px;border:1px solid #107e3e;border-radius:16px;background:#f1fdf6;"></div><svg style="left:0;top:0" width="40" height="33"><path d="M17.9 16.3L23.6 22.3L31.6 10.3" fill="none" stroke="#107e3e" stroke-width="1.9"/></svg><div style="position:absolute;left:45.9px;top:-3.2px;width:36.5px;height:36.5px;border:1px solid #107e3e;border-radius:50%;background:#fff;"></div></div>
<div class="t" style="left:775.3px;top:1059.16px;font-size:20.6px;line-height:20.6px;color:#32363a;font-weight:400;">NDB@plsw-</div>
<div class="t" style="left:775.3px;top:1083.16px;font-size:20.6px;line-height:20.6px;color:#32363a;font-weight:400;">hana10-</div>
<div class="t" style="left:775.3px;top:1107.16px;font-size:20.6px;line-height:20.6px;color:#32363a;font-weight:400;">dev00:30013</div>
<div style="position:absolute;left:984.3px;top:1077.8px;width:85px;height:39px;opacity:0.4;"><div style="position:absolute;left:0;top:0;width:80px;height:30.5px;border:1px solid #107e3e;border-radius:16px;background:#f1fdf6;"></div><svg style="left:0;top:0" width="40" height="33"><path d="M17.9 16.3L23.6 22.3L31.6 10.3" fill="none" stroke="#107e3e" stroke-width="1.9"/></svg><div style="position:absolute;left:45.9px;top:-3.2px;width:36.5px;height:36.5px;border:1px solid #107e3e;border-radius:50%;background:#fff;"></div></div>
<div class="t" style="left:1073px;top:1059.30px;font-size:20.2px;line-height:20.2px;color:#32363a;font-weight:400;">PFORCE_DEMO_2</div>
<div class="t" style="left:1073px;top:1083.30px;font-size:20.2px;line-height:20.2px;color:#32363a;font-weight:400;">0220203_SPROC_</div>
<div class="t" style="left:1073px;top:1107.30px;font-size:20.2px;line-height:20.2px;color:#32363a;font-weight:400;">12909</div>
<div style="position:absolute;left:1289px;top:1074.7px;width:46px;height:36.5px;border:1px solid #0854a0;border-radius:6px;background:#fff;"><svg style="left:-1px;top:-1px" width="48" height="39"><path d="M15 30L16.5 25.5L31.5 10.5L34.5 13.5L19.5 28.5Z" fill="none" stroke="#0854a0" stroke-width="1.5" stroke-linejoin="round"/><path d="M29.3 12.7L32.3 15.7" stroke="#0854a0" stroke-width="1.5"/><path d="M14.5 30.5L15.6 26.6L18.6 29.4Z" fill="#0854a0"/></svg></div>
<div style="position:absolute;left:1574px;top:1074.7px;width:46px;height:36.5px;border:1px solid #0854a0;border-radius:6px;background:#fff;opacity:0.4;"><svg style="left:-1px;top:-1px" width="48" height="39"><path d="M24.6 9.8A9.6 9.6 0 1 1 14.6 19.3V16" fill="none" stroke="#0854a0" stroke-width="1.7"/><path d="M14.5 14.5L12.3 18.5H16.7Z" fill="#0854a0"/><path d="M21.1 15.1V23.8L29.5 19.4Z" fill="#0854a0"/></svg></div>
<div style="position:absolute;left:1745.3px;top:1077.8px;width:86px;height:39px;"><div style="position:absolute;left:2px;top:0;width:82px;height:30.5px;border:1px solid #bb0000;border-radius:16px;background:#ffebeb;"></div><svg style="left:0;top:0" width="86" height="33"><path d="M54 10.5L65.5 21.5M65.5 10.5L54 21.5" fill="none" stroke="#bb0000" stroke-width="2.3"/></svg><div style="position:absolute;left:0;top:-3.2px;width:36.5px;height:36.5px;border:1px solid #bb0000;border-radius:50%;background:#fff;"></div></div>
<div style="position:absolute;left:373px;top:1137px;width:1525px;height:84px;background:#f2f2f2;"></div>
<div style="position:absolute;left:373px;top:1221px;width:1525px;height:1px;background:#e5e5e5;"></div>
<div style="position:absolute;left:402.4px;top:1163.5px;width:85px;height:39px;opacity:0.4;"><div style="position:absolute;left:0;top:0;width:80px;height:30.5px;border:1px solid #107e3e;border-radius:16px;background:#f1fdf6;"></div><svg style="left:0;top:0" width="40" height="33"><path d="M17.9 16.3L23.6 22.3L31.6 10.3" fill="none" stroke="#107e3e" stroke-width="1.9"/></svg><div style="position:absolute;left:45.9px;top:-3.2px;width:36.5px;height:36.5px;border:1px solid #107e3e;border-radius:50%;background:#fff;"></div></div>
<div class="t" style="left:491.2px;top:1169.55px;font-size:20.2px;line-height:20.2px;color:#32363a;font-weight:400;">HANA</div>
<div style="position:absolute;left:686.9px;top:1163.5px;width:85px;height:39px;opacity:0.4;"><div style="position:absolute;left:0;top:0;width:80px;height:30.5px;border:1px solid #107e3e;border-radius:16px;background:#f1fdf6;"></div><svg style="left:0;top:0" width="40" height="33"><path d="M17.9 16.3L23.6 22.3L31.6 10.3" fill="none" stroke="#107e3e" stroke-width="1.9"/></svg><div style="position:absolute;left:45.9px;top:-3.2px;width:36.5px;height:36.5px;border:1px solid #107e3e;border-radius:50%;background:#fff;"></div></div>
<div class="t" style="left:775.3px;top:1144.81px;font-size:20.6px;line-height:20.6px;color:#32363a;font-weight:400;">NDB@plsw-</div>
<div class="t" style="left:775.3px;top:1168.81px;font-size:20.6px;line-height:20.6px;color:#32363a;font-weight:400;">hana10-</div>
<div class="t" style="left:775.3px;top:1192.81px;font-size:20.6px;line-height:20.6px;color:#32363a;font-weight:400;">dev00:30013</div>
<div style="position:absolute;left:984.3px;top:1163.5px;width:85px;height:39px;opacity:0.4;"><div style="position:absolute;left:0;top:0;width:80px;height:30.5px;border:1px solid #107e3e;border-radius:16px;background:#f1fdf6;"></div><svg style="left:0;top:0" width="40" height="33"><path d="M17.9 16.3L23.6 22.3L31.6 10.3" fill="none" stroke="#107e3e" stroke-width="1.9"/></svg><div style="position:absolute;left:45.9px;top:-3.2px;width:36.5px;height:36.5px;border:1px solid #107e3e;border-radius:50%;background:#fff;"></div></div>
<div class="t" style="left:1073px;top:1144.95px;font-size:20.2px;line-height:20.2px;color:#32363a;font-weight:400;">DEMO_2020_10_2</div>
<div class="t" style="left:1073px;top:1168.95px;font-size:20.2px;line-height:20.2px;color:#32363a;font-weight:400;">0220209_SPROC_</div>
<div class="t" style="left:1073px;top:1192.95px;font-size:20.2px;line-height:20.2px;color:#32363a;font-weight:400;">12935</div>
<div style="position:absolute;left:1289px;top:1160.3px;width:46px;height:36.5px;border:1px solid #0854a0;border-radius:6px;background:#fff;"><svg style="left:-1px;top:-1px" width="48" height="39"><path d="M15 30L16.5 25.5L31.5 10.5L34.5 13.5L19.5 28.5Z" fill="none" stroke="#0854a0" stroke-width="1.5" stroke-linejoin="round"/><path d="M29.3 12.7L32.3 15.7" stroke="#0854a0" stroke-width="1.5"/><path d="M14.5 30.5L15.6 26.6L18.6 29.4Z" fill="#0854a0"/></svg></div>
<div style="position:absolute;left:1574px;top:1160.3px;width:46px;height:36.5px;border:1px solid #0854a0;border-radius:6px;background:#fff;opacity:0.4;"><svg style="left:-1px;top:-1px" width="48" height="39"><path d="M24.6 9.8A9.6 9.6 0 1 1 14.6 19.3V16" fill="none" stroke="#0854a0" stroke-width="1.7"/><path d="M14.5 14.5L12.3 18.5H16.7Z" fill="#0854a0"/><path d="M21.1 15.1V23.8L29.5 19.4Z" fill="#0854a0"/></svg></div>
<div style="position:absolute;left:1745.3px;top:1163.5px;width:86px;height:39px;"><div style="position:absolute;left:2px;top:0;width:82px;height:30.5px;border:1px solid #bb0000;border-radius:16px;background:#ffebeb;"></div><svg style="left:0;top:0" width="86" height="33"><path d="M54 10.5L65.5 21.5M65.5 10.5L54 21.5" fill="none" stroke="#bb0000" stroke-width="2.3"/></svg><div style="position:absolute;left:0;top:-3.2px;width:36.5px;height:36.5px;border:1px solid #bb0000;border-radius:50%;background:#fff;"></div></div>
<div style="position:absolute;left:373px;top:1222px;width:1525px;height:85px;background:#fff;"></div>
<div style="position:absolute;left:373px;top:1307px;width:1525px;height:1px;background:#e5e5e5;"></div>
<div style="position:absolute;left:402.4px;top:1249.1px;width:85px;height:39px;opacity:0.4;"><div style="position:absolute;left:0;top:0;width:80px;height:30.5px;border:1px solid #107e3e;border-radius:16px;background:#f1fdf6;"></div><svg style="left:0;top:0" width="40" height="33"><path d="M17.9 16.3L23.6 22.3L31.6 10.3" fill="none" stroke="#107e3e" stroke-width="1.9"/></svg><div style="position:absolute;left:45.9px;top:-3.2px;width:36.5px;height:36.5px;border:1px solid #107e3e;border-radius:50%;background:#fff;"></div></div>
<div class="t" style="left:491.2px;top:1255.20px;font-size:20.2px;line-height:20.2px;color:#32363a;font-weight:400;">HANA</div>
<div style="position:absolute;left:686.9px;top:1249.1px;width:85px;height:39px;opacity:0.4;"><div style="position:absolute;left:0;top:0;width:80px;height:30.5px;border:1px solid #107e3e;border-radius:16px;background:#f1fdf6;"></div><svg style="left:0;top:0" width="40" height="33"><path d="M17.9 16.3L23.6 22.3L31.6 10.3" fill="none" stroke="#107e3e" stroke-width="1.9"/></svg><div style="position:absolute;left:45.9px;top:-3.2px;width:36.5px;height:36.5px;border:1px solid #107e3e;border-radius:50%;background:#fff;"></div></div>
<div class="t" style="left:775.3px;top:1230.46px;font-size:20.6px;line-height:20.6px;color:#32363a;font-weight:400;">NDB@plsw-</div>
<div class="t" style="left:775.3px;top:1254.46px;font-size:20.6px;line-height:20.6px;color:#32363a;font-weight:400;">hana10-</div>
<div class="t" style="left:775.3px;top:1278.46px;font-size:20.6px;line-height:20.6px;color:#32363a;font-weight:400;">dev00:30013</div>
<div style="position:absolute;left:984.3px;top:1249.1px;width:85px;height:39px;opacity:0.4;"><div style="position:absolute;left:0;top:0;width:80px;height:30.5px;border:1px solid #107e3e;border-radius:16px;background:#f1fdf6;"></div><svg style="left:0;top:0" width="40" height="33"><path d="M17.9 16.3L23.6 22.3L31.6 10.3" fill="none" stroke="#107e3e" stroke-width="1.9"/></svg><div style="position:absolute;left:45.9px;top:-3.2px;width:36.5px;height:36.5px;border:1px solid #107e3e;border-radius:50%;background:#fff;"></div></div>
<div class="t" style="left:1073px;top:1242.60px;font-size:20.2px;line-height:20.2px;color:#32363a;font-weight:400;">PFDEMOGB_PIOT</div>
<div style="position:absolute;left:1289px;top:1246.0px;width:46px;height:36.5px;border:1px solid #0854a0;border-radius:6px;background:#fff;"><svg style="left:-1px;top:-1px" width="48" height="39"><path d="M15 30L16.5 25.5L31.5 10.5L34.5 13.5L19.5 28.5Z" fill="none" stroke="#0854a0" stroke-width="1.5" stroke-linejoin="round"/><path d="M29.3 12.7L32.3 15.7" stroke="#0854a0" stroke-width="1.5"/><path d="M14.5 30.5L15.6 26.6L18.6 29.4Z" fill="#0854a0"/></svg></div>
<div style="position:absolute;left:1574px;top:1246.0px;width:46px;height:36.5px;border:1px solid #0854a0;border-radius:6px;background:#fff;opacity:0.4;"><svg style="left:-1px;top:-1px" width="48" height="39"><path d="M24.6 9.8A9.6 9.6 0 1 1 14.6 19.3V16" fill="none" stroke="#0854a0" stroke-width="1.7"/><path d="M14.5 14.5L12.3 18.5H16.7Z" fill="#0854a0"/><path d="M21.1 15.1V23.8L29.5 19.4Z" fill="#0854a0"/></svg></div>
<div style="position:absolute;left:1745.3px;top:1249.1px;width:86px;height:39px;"><div style="position:absolute;left:2px;top:0;width:82px;height:30.5px;border:1px solid #bb0000;border-radius:16px;background:#ffebeb;"></div><svg style="left:0;top:0" width="86" height="33"><path d="M54 10.5L65.5 21.5M65.5 10.5L54 21.5" fill="none" stroke="#bb0000" stroke-width="2.3"/></svg><div style="position:absolute;left:0;top:-3.2px;width:36.5px;height:36.5px;border:1px solid #bb0000;border-radius:50%;background:#fff;"></div></div>
<div style="position:absolute;left:1199.7px;top:731px;width:60.09999999999991px;height:23.5px;background:linear-gradient(90deg,#d4d4d4,#e2e2e2);"></div>
<div style="position:absolute;left:1072px;top:755px;width:20px;height:16px;background:linear-gradient(90deg,#e4e4e4,#e4e4e4);"></div>
<div style="position:absolute;left:1275px;top:737px;width:66px;height:23px;background:linear-gradient(90deg,#dcdcdc,#d6d6d6);"></div>
<div style="position:absolute;left:1197.5px;top:813px;width:62.299999999999955px;height:23.5px;background:linear-gradient(90deg,#cfcfcf,#dadada);"></div>
<div style="position:absolute;left:1072px;top:840px;width:83px;height:24px;background:linear-gradient(90deg,#cecece,#dedede);"></div>
<div style="position:absolute;left:1115px;top:900.4px;width:144.29999999999995px;height:20.100000000000023px;background:linear-gradient(90deg,#d3d3d3,#f0f0f0);"></div>
<div style="position:absolute;left:1072px;top:923.8px;width:100px;height:21.40000000000009px;background:linear-gradient(90deg,#d6d6d6,#dcdcdc);"></div>
<div style="position:absolute;left:1115px;top:973.2px;width:146px;height:21.399999999999977px;background:linear-gradient(90deg,#d0d0d0,#d2d2d2);"></div>
<div style="position:absolute;left:1072px;top:1001.2px;width:187px;height:17.299999999999955px;background:linear-gradient(90deg,#c9c9c9,#e2e2e2);"></div>
<div style="position:absolute;left:1072px;top:1021.2px;width:78px;height:21.5px;background:linear-gradient(90deg,#cccccc,#d8d8d8);"></div>
<div style="position:absolute;left:361px;top:1251px;width:1551px;height:60px;background:#fff;"></div>
<div style="position:absolute;left:361px;top:1251px;width:1550px;height:1px;background:#d9d9d9;"></div>
<div class="t" style="left:392px;top:1271.60px;font-size:20.2px;line-height:20.2px;color:#0854a0;font-weight:400;">0</div>
<div style="position:absolute;left:1898px;top:186px;width:13px;height:1065px;background:#fff;"></div>
<div style="position:absolute;left:1898px;top:186px;width:13px;height:864px;background:#929395;border-radius:6px 0 0 6px;"></div>
<div style="position:absolute;left:0px;top:0px;width:1912px;height:1px;background:#5a5a5a;"></div>
<div style="position:absolute;left:0px;top:0px;width:1px;height:1311px;background:#5a5a5a;"></div>
<div style="position:absolute;left:1911px;top:0px;width:1px;height:1311px;background:#5a5a5a;"></div>
<div style="position:absolute;left:0px;top:1310px;width:1912px;height:1px;background:#5a5a5a;"></div>
</body></html>
